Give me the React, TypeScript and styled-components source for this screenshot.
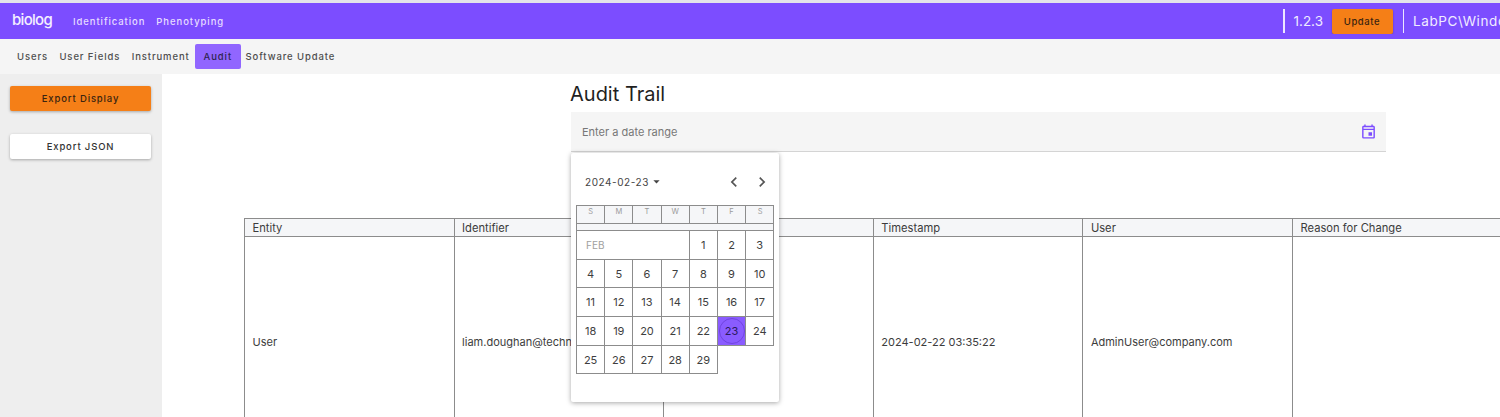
import React from 'react'
import styled, { createGlobalStyle } from 'styled-components'
import { MdOutlineEvent, MdArrowDropDown, MdChevronLeft, MdChevronRight } from 'react-icons/md'

const Global = createGlobalStyle`
    html, body {
        margin: 0;
        padding: 0;
        background: #fff;
        font-family: Inter, "Liberation Sans", sans-serif;
    }
`

const tabs = ['Users', 'User Fields', 'Instrument', 'Audit', 'Software Update']
const columns = ['Entity', 'Identifier', '', 'Timestamp', 'User', 'Reason for Change']
const row = ['User', 'liam.doughan@technosoft.com', '', '2024-02-22 03:35:22', 'AdminUser@company.com', '']
const weekDays = ['S', 'M', 'T', 'W', 'T', 'F', 'S']
const days = Array.from({ length: 29 }, (_, i) => i + 1)

const App = () => {
    return (
        <Page>
            <Global />
            <TopBar>
                <Logo>biolog</Logo>
                <TopLink>Identification</TopLink>
                <TopLink>Phenotyping</TopLink>
                <TopRight>
                    <Divider />
                    <Version>1.2.3</Version>
                    <UpdateButton>Update</UpdateButton>
                    <Divider />
                    <UserName>LabPC\Windows</UserName>
                </TopRight>
            </TopBar>
            <SubNav>
                {tabs.map((t) => (
                    <Tab key={t} $active={t === 'Audit'}>{t}</Tab>
                ))}
            </SubNav>
            <Main>
                <Sidebar>
                    <SideButton $primary>Export Display</SideButton>
                    <SideButton>Export JSON</SideButton>
                </Sidebar>
                <Content>
                    <AuditBlock>
                        <Title>Audit Trail</Title>
                        <DateField>
                            <Placeholder>Enter a date range</Placeholder>
                            <MdOutlineEvent size={17} color="#7c4dff" />
                        </DateField>
                        <Calendar>
                            <CalendarHead>
                                <MonthPick>2024-02-23<MdArrowDropDown size={15} /></MonthPick>
                                <Arrows>
                                    <MdChevronLeft size={20} />
                                    <MdChevronRight size={20} />
                                </Arrows>
                            </CalendarHead>
                            <WeekRow>
                                {weekDays.map((d, i) => (
                                    <WeekDay key={i}>{d}</WeekDay>
                                ))}
                            </WeekRow>
                            <WeekGap />
                            <DayGrid>
                                <MonthCell>FEB</MonthCell>
                                {days.map((d) => (
                                    <DayCell key={d} $selected={d === 23}>
                                        {d === 23 ? <Ring>{d}</Ring> : d}
                                    </DayCell>
                                ))}
                            </DayGrid>
                        </Calendar>
                    </AuditBlock>
                    <Table>
                        {columns.map((c, i) => (
                            <HeadCell key={i}>{c}</HeadCell>
                        ))}
                        {row.map((c, i) => (
                            <BodyCell key={i}>{c}</BodyCell>
                        ))}
                    </Table>
                </Content>
            </Main>
        </Page>
    )
}

export default App

const Page = styled.div`
    width: 1500px;
    height: 417px;
    overflow: hidden;
    background: #fff;
    border-top: 3px solid #e4e4ea;
    box-sizing: border-box;
`

const TopBar = styled.div`
    height: 36px;
    background-color: #7c4dff;
    display: flex;
    align-items: center;
    padding-left: 12px;
    box-sizing: border-box;
`

const Logo = styled.div`
    color: #f4efff;
    font-size: 15px;
    font-weight: 500;
    letter-spacing: -0.7px;
    width: 61px;
    margin-top: -3px;
`

const TopLink = styled.div`
    color: #e6dcff;
    font-size: 9.5px;
    font-weight: 500;
    letter-spacing: 0.92px;
    margin-right: 11px;
`

const TopRight = styled.div`
    margin-left: auto;
    width: 217px;
    flex-shrink: 0;
    display: flex;
    align-items: center;
    overflow: hidden;
    white-space: nowrap;
`

const Divider = styled.div`
    width: 1.5px;
    height: 24px;
    background: #ece6ff;
    flex-shrink: 0;
`

const Version = styled.div`
    color: #efeaff;
    font-size: 13.5px;
    margin-left: 9px;
    width: 38px;
    flex-shrink: 0;
`

const UpdateButton = styled.div`
    width: 61px;
    height: 25px;
    background: #f57f17;
    border-radius: 2px;
    box-shadow: 0 1px 2px rgba(0, 0, 0, 0.3);
    color: #3a2410;
    font-size: 9.5px;
    font-weight: 500;
    letter-spacing: 0.6px;
    display: flex;
    align-items: center;
    justify-content: center;
    margin-right: 10px;
    flex-shrink: 0;
`

const UserName = styled.div`
    color: #f0ebff;
    font-size: 13.5px;
    letter-spacing: 0.6px;
    margin-left: 9px;
`

const SubNav = styled.div`
    height: 35px;
    background: #f5f5f5;
    display: flex;
    align-items: center;
    padding-left: 10px;
    box-sizing: border-box;
`

const Tab = styled.div<{ $active?: boolean }>`
    height: 25px;
    padding: 0 ${(p) => (p.$active ? '8.5px' : '7px')};
    margin-right: ${(p) => (p.$active ? '-2px' : '-2.6px')};
    margin-left: ${(p) => (p.$active ? '1px' : '0')};
    border-radius: 2px;
    display: flex;
    align-items: center;
    font-size: 9.5px;
    font-weight: 500;
    letter-spacing: 0.9px;
    color: ${(p) => (p.$active ? '#2f2450' : '#4e4e4e')};
    background: ${(p) => (p.$active ? '#9166ff' : 'transparent')};
`

const Main = styled.div`
    display: flex;
    height: 343px;
`

const Sidebar = styled.div`
    width: 162px;
    flex-shrink: 0;
    background: #eeeeee;
    padding: 12px 11px 0 10px;
    box-sizing: border-box;
    display: flex;
    flex-direction: column;
    gap: 23px;
`

const SideButton = styled.div<{ $primary?: boolean }>`
    height: 25px;
    border-radius: 2px;
    background: ${(p) => (p.$primary ? '#f57f17' : '#fff')};
    color: ${(p) => (p.$primary ? '#3a2410' : '#333')};
    box-shadow: 0 1px 3px rgba(0, 0, 0, 0.3);
    font-size: 9.5px;
    font-weight: 500;
    letter-spacing: 0.85px;
    display: flex;
    align-items: center;
    justify-content: center;
`

const Content = styled.div`
    flex: 1;
    min-width: 0;
    overflow: hidden;
`

const AuditBlock = styled.div`
    position: relative;
    margin-left: 409px;
    width: 815px;
    height: 144px;
`

const Title = styled.div`
    height: 38px;
    line-height: 41px;
    font-size: 20px;
    font-weight: 400;
    color: #1f1f1f;
    margin-left: -1px;
`

const DateField = styled.div`
    height: 40px;
    background: #f5f5f5;
    border-bottom: 1px solid #d4d4d4;
    box-sizing: border-box;
    display: flex;
    align-items: center;
    justify-content: space-between;
    padding: 0 9px 0 11px;
`

const Placeholder = styled.div`
    color: #777;
    font-size: 11px;
`

const Calendar = styled.div`
    position: absolute;
    left: 0;
    top: 79px;
    z-index: 2;
    width: 208px;
    height: 249px;
    background: #fff;
    border-radius: 2px;
    box-shadow: 0 1px 5px rgba(0, 0, 0, 0.35);
    padding: 0 5px;
    box-sizing: border-box;
`

const CalendarHead = styled.div`
    height: 52px;
    display: flex;
    align-items: center;
    justify-content: space-between;
    padding: 5px 2px 0 9px;
    box-sizing: border-box;
`

const MonthPick = styled.div`
    display: flex;
    align-items: center;
    color: #444;
    font-size: 10px;
    letter-spacing: 0.55px;
`

const Arrows = styled.div`
    display: flex;
    gap: 8px;
    color: #555;
`

const WeekRow = styled.div`
    display: grid;
    grid-template-columns: repeat(7, 28.2px);
    width: 198px;
    height: 19px;
    border: 1px solid #8c8c8c;
    box-sizing: border-box;
    background: #f5f6f8;
`

const WeekDay = styled.div`
    display: flex;
    align-items: flex-start;
    justify-content: center;
    padding-top: 1px;
    color: #9a9a9a;
    font-size: 7.5px;
    border-right: 1px solid #8c8c8c;
    &:last-child {
        border-right: none;
    }
`

const WeekGap = styled.div`
    width: 198px;
    height: 6px;
    background: #f5f6f8;
    border-left: 1px solid #8c8c8c;
    border-right: 1px solid #8c8c8c;
    box-sizing: border-box;
`

const DayGrid = styled.div`
    display: grid;
    grid-template-columns: repeat(7, 28.2px);
    grid-auto-rows: 28.7px;
    width: 198px;
`

const DayCell = styled.div<{ $selected?: boolean }>`
    border: 1px solid #8c8c8c;
    margin: 0 -1px -1px 0;
    display: flex;
    align-items: center;
    justify-content: center;
    color: #3e3e3e;
    font-size: 11px;
    background: ${(p) => (p.$selected ? '#8a5cff' : '#fff')};
`

const MonthCell = styled(DayCell)`
    grid-column: span 4;
    justify-content: flex-start;
    padding-left: 9px;
    color: #a0a0a0;
    font-size: 10px;
`

const Ring = styled.div`
    width: 26px;
    height: 26px;
    border-radius: 50%;
    border: 1px solid #7044e0;
    box-sizing: border-box;
    display: flex;
    align-items: center;
    justify-content: center;
    color: #2a1a5c;
`

const Table = styled.div`
    display: grid;
    grid-template-columns: repeat(6, 209.6px);
    grid-template-rows: 18px 210px;
    margin-left: 82px;
    width: 1258px;
`

const HeadCell = styled.div`
    border: 1px solid #8c8c8c;
    margin: 0 -1px -1px 0;
    background: #f5f6f8;
    color: #3c3c3c;
    font-size: 11.2px;
    display: flex;
    align-items: center;
    padding-left: 7.5px;
    white-space: nowrap;
`

const BodyCell = styled.div`
    border: 1px solid #8c8c8c;
    margin: 0 -1px -1px 0;
    color: #3c3c3c;
    font-size: 11px;
    display: flex;
    align-items: center;
    padding-left: 7.5px;
    white-space: nowrap;
    overflow: hidden;
`
